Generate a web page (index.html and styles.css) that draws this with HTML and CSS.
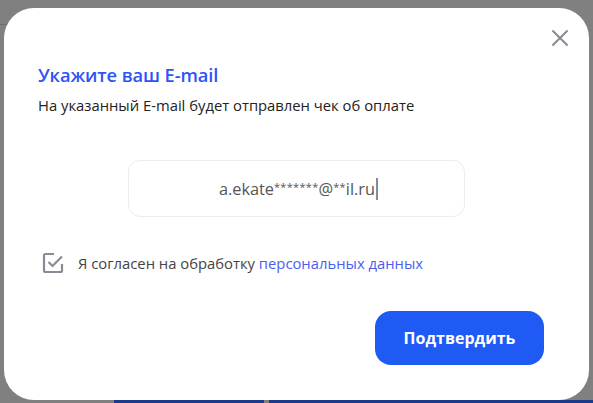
FILE: index.html
```html
<!DOCTYPE html>
<html lang="ru">
<head>
  <meta charset="UTF-8">
  <title>Укажите ваш E-mail</title>
  <link rel="stylesheet" href="styles.css">
</head>
<body>
  <div class="page">
    <div class="page-top">
      <div class="page-line"></div>
    </div>
    <div class="page-bottom">
      <div class="tab tab-a"></div>
      <div class="tab tab-b"></div>
    </div>
  </div>

  <div class="overlay">
    <div class="modal">
      <button class="close" aria-label="Закрыть">
        <svg width="18" height="18" viewBox="0 0 18 18">
          <path d="M2 2 L16 16 M16 2 L2 16" stroke="#8b8b95" stroke-width="2" stroke-linecap="round" fill="none"/>
        </svg>
      </button>

      <h2 class="title">Укажите ваш E-mail</h2>
      <p class="subtitle">На указанный E-mail будет отправлен чек об оплате</p>

      <div class="field">
        <span class="field-value">a.ekate<span class="mask">*******</span>@<span class="mask">**</span>il.ru</span><span class="caret"></span>
      </div>

      <label class="agree">
        <svg class="check" width="22" height="22" viewBox="0 0 22 22">
          <path d="M12 2 H3.5 Q2 2 2 3.5 V18.5 Q2 20 3.5 20 H18.5 Q20 20 20 18.5 V12" stroke="#8b8b95" stroke-width="2.2" fill="none"/>
          <path d="M6.5 10 L10.5 14 L20 4.5" stroke="#8b8b95" stroke-width="2.2" fill="none"/>
        </svg>
        <span>Я согласен на обработку <a href="#">персональных данных</a></span>
      </label>

      <div class="actions">
        <button class="confirm">Подтвердить</button>
      </div>
    </div>
  </div>
</body>
</html>
```

FILE: styles.css
```css
* {
  box-sizing: border-box;
}

body {
  margin: 0;
  background-color: #808080;
  font-family: "Open Sans", Arial, sans-serif;
  overflow: hidden;
}

.page {
  height: 403px;
  display: flex;
  flex-direction: column;
  justify-content: space-between;
}

.page-top {
  height: 25px;
  position: relative;
}

.page-line {
  position: absolute;
  left: 0;
  top: 24px;
  width: 8px;
  height: 1px;
  background-color: #6e6e6e;
}

.page-bottom {
  display: flex;
  gap: 5px;
  padding-left: 114px;
  height: 3px;
}

.tab {
  background-color: #1c3a8c;
}

.tab-a {
  width: 150px;
}

.tab-b {
  flex: 1;
}

.overlay {
  position: fixed;
  inset: 0;
  padding: 8px 4px 3px 4px;
}

.modal {
  position: relative;
  width: 585px;
  height: 392px;
  background-color: #fff;
  border-radius: 30px;
  padding: 54px 42px 0 34px;
}

.close {
  position: absolute;
  top: 21px;
  right: 20px;
  border: none;
  background: none;
  padding: 0;
  width: 18px;
  height: 18px;
  cursor: pointer;
}

.title {
  margin: 0;
  font-size: 18.3px;
  font-weight: 600;
  color: #2d55f5;
  letter-spacing: -0.1px;
}

.subtitle {
  margin: 8px 0 0;
  font-size: 14.8px;
  font-weight: 500;
  color: #222;
}

.field {
  margin: 45px auto 0 90px;
  width: 337px;
  height: 57px;
  border: 1px solid #ececee;
  border-radius: 12px;
  display: flex;
  align-items: center;
  justify-content: center;
  padding-left: 4px;
  font-size: 16.3px;
  color: #555;
}

.mask {
  font-size: 11px;
  vertical-align: 4px;
  letter-spacing: 0.3px;
}

.caret {
  display: inline-block;
  width: 2px;
  height: 22px;
  margin-left: 1px;
  background-color: #7d8ea3;
}

.agree {
  margin-top: 35px;
  display: flex;
  align-items: center;
  gap: 14px;
  padding-left: 4px;
  font-size: 14.8px;
  color: #444;
}

.agree a {
  color: #4b5ef2;
  text-decoration: none;
}

.actions {
  margin-top: 37px;
  display: flex;
  justify-content: flex-end;
  padding-right: 3px;
}

.confirm {
  width: 169px;
  height: 54px;
  border: none;
  border-radius: 16px;
  background-color: #1f5af5;
  color: #fff;
  font-family: "Open Sans", Arial, sans-serif;
  font-size: 16px;
  font-weight: 700;
  cursor: pointer;
}
```
